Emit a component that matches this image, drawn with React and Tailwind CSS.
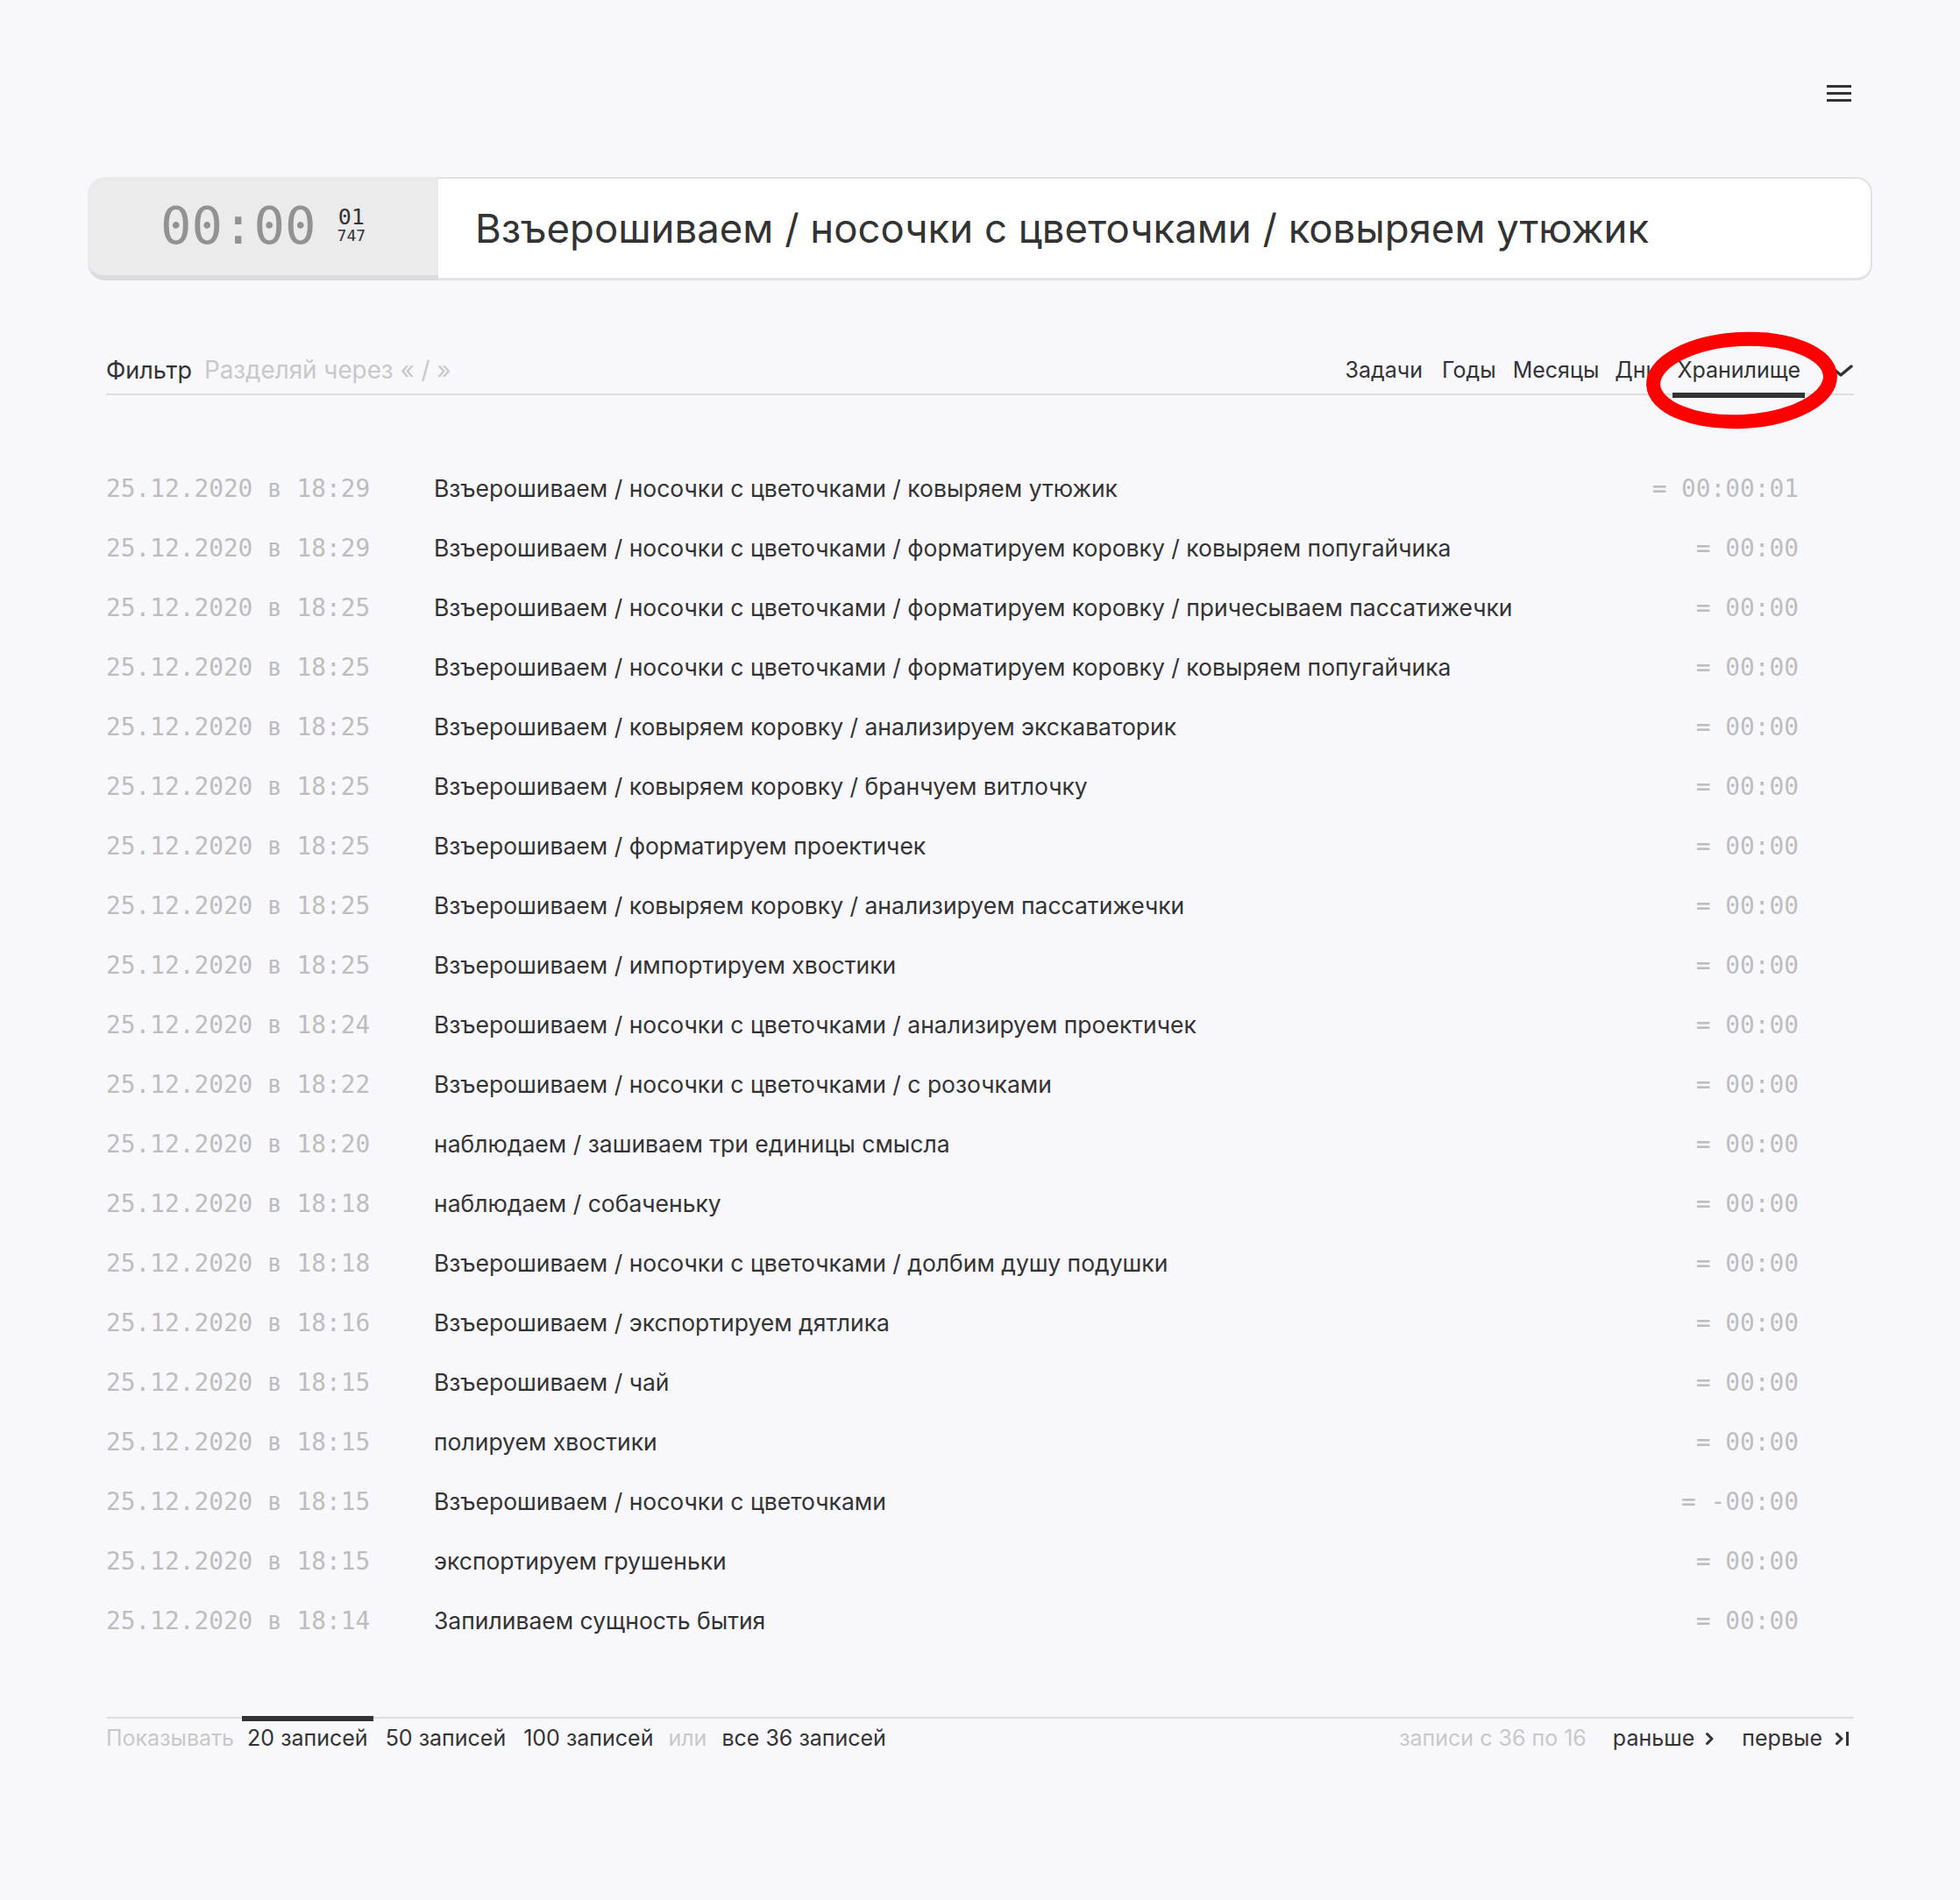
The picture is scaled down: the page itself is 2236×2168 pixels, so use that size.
import React from "react";

const rows = [
  ["18:29", "Взъерошиваем / носочки с цветочками / ковыряем утюжик", "= 00:00:01"],
  ["18:29", "Взъерошиваем / носочки с цветочками / форматируем коровку / ковыряем попугайчика", "= 00:00"],
  ["18:25", "Взъерошиваем / носочки с цветочками / форматируем коровку / причесываем пассатижечки", "= 00:00"],
  ["18:25", "Взъерошиваем / носочки с цветочками / форматируем коровку / ковыряем попугайчика", "= 00:00"],
  ["18:25", "Взъерошиваем / ковыряем коровку / анализируем экскаваторик", "= 00:00"],
  ["18:25", "Взъерошиваем / ковыряем коровку / бранчуем витлочку", "= 00:00"],
  ["18:25", "Взъерошиваем / форматируем проектичек", "= 00:00"],
  ["18:25", "Взъерошиваем / ковыряем коровку / анализируем пассатижечки", "= 00:00"],
  ["18:25", "Взъерошиваем / импортируем хвостики", "= 00:00"],
  ["18:24", "Взъерошиваем / носочки с цветочками / анализируем проектичек", "= 00:00"],
  ["18:22", "Взъерошиваем / носочки с цветочками / с розочками", "= 00:00"],
  ["18:20", "наблюдаем / зашиваем три единицы смысла", "= 00:00"],
  ["18:18", "наблюдаем / собаченьку", "= 00:00"],
  ["18:18", "Взъерошиваем / носочки с цветочками / долбим душу подушки", "= 00:00"],
  ["18:16", "Взъерошиваем / экспортируем дятлика", "= 00:00"],
  ["18:15", "Взъерошиваем / чай", "= 00:00"],
  ["18:15", "полируем хвостики", "= 00:00"],
  ["18:15", "Взъерошиваем / носочки с цветочками", "= -00:00"],
  ["18:15", "экспортируем грушеньки", "= 00:00"],
  ["18:14", "Запиливаем сущность бытия", "= 00:00"],
];

function Chevron({ className }) {
  return (
    <svg className={className} viewBox="0 0 10 16" fill="none">
      <path d="M2.5 2.5 L8 8 L2.5 13.5" stroke="#333" strokeWidth="3" strokeLinecap="round" strokeLinejoin="round" />
    </svg>
  );
}

export default function App() {
  return (
    <div className="min-h-[2168px] bg-[#f8f8fc] font-['Inter',sans-serif] text-[#333]">
      {/* top bar */}
      <div className="flex justify-end pr-[124px] pt-[97px]">
        <div className="flex w-[28px] flex-col gap-[5px]">
          <div className="h-[3px] bg-[#333]" />
          <div className="h-[3px] bg-[#333]" />
          <div className="h-[3px] bg-[#333]" />
        </div>
      </div>

      {/* timer card */}
      <div className="mx-[100px] mt-[86px] flex h-[118px]">
        <div className="flex w-[400px] items-center justify-center gap-[24px] rounded-l-[20px] border-b-[6px] border-[#dcdcdc] bg-[#ebebeb] pb-[2px] font-['DejaVu_Sans_Mono',monospace]">
          <span className="text-[59px] leading-none tracking-[0px] text-[#929292]">00:00</span>
          <div className="flex flex-col items-center leading-none text-[#333]">
            <span className="text-[25px] leading-[24px]">01</span>
            <span className="text-[18px] leading-[18px]">747</span>
          </div>
        </div>
        <div className="flex flex-1 items-center rounded-r-[18px] border-2 border-b-[3px] border-l-0 border-[#e2e2e2] bg-white pl-[42px]">
          <span className="text-[45.5px] leading-none">Взъерошиваем / носочки с цветочками / ковыряем утюжик</span>
        </div>
      </div>

      <div className="mx-[121px]">
        {/* filter header */}
        <div className="relative mt-[77px] flex h-[54px] items-stretch border-b-2 border-[#dedede] text-[25px]">
          <div className="flex items-center gap-[14px] text-[27px]">
            <span>Фильтр</span>
            <span className="text-[27.8px] text-[#c8c8c8]">Разделяй через « / »</span>
          </div>
          <div className="ml-auto flex items-stretch">
            <div className="flex items-center px-[6px]">Задачи</div>
            <div className="ml-[10px] flex items-center px-[6px]">Годы</div>
            <div className="ml-[7px] flex items-center px-[6px]">Месяцы</div>
            <div className="ml-[6px] flex items-center px-[6px]">Дни</div>
            <div className="relative ml-[10px] flex items-center px-[5px]">
              Хранилище
              <div className="absolute bottom-[-5px] left-0 right-0 h-[6px] bg-[#333]" />
            </div>
            <div className="ml-[26px] flex items-center">
              <svg width="30" height="16" viewBox="0 0 30 16" fill="none">
                <path d="M3 3 L15 13 L27 3" stroke="#333" strokeWidth="3.5" strokeLinecap="round" strokeLinejoin="round" />
              </svg>
            </div>
          </div>
          <svg className="pointer-events-none absolute right-[18px] top-[-19px]" width="220" height="112" viewBox="0 0 220 112" fill="none">
            <ellipse cx="110" cy="56" rx="101" ry="47" stroke="#ff0000" strokeWidth="16" transform="rotate(-3 110 56)" />
          </svg>
        </div>

        {/* rows */}
        <div className="mt-[73px] flex flex-col">
          {rows.map(([time, text, dur], i) => (
            <div key={i} className="flex h-[68px] items-center">
              <div className="w-[374px] shrink-0 whitespace-pre font-['DejaVu_Sans_Mono',monospace] text-[27.8px] text-[#bdbdbd]">
                {"25.12.2020 в " + time}
              </div>
              <div className="flex-1 text-[26.5px]">{text}</div>
              <div className="whitespace-pre pr-[63px] font-['DejaVu_Sans_Mono',monospace] text-[27.8px] text-[#bdbdbd]">
                {dur}
              </div>
            </div>
          ))}
        </div>

        {/* footer */}
        <div className="mt-[75px] flex h-[48px] items-stretch border-t-2 border-[#dedede] text-[25px]">
          <div className="flex items-stretch">
            <div className="flex items-center pr-[9px] text-[#c8c8c8]">Показывать</div>
            <div className="relative flex items-center px-[6px]">
              20 записей
              <div className="absolute left-0 right-0 top-[-3px] h-[6px] bg-[#333]" />
            </div>
            <div className="ml-[8px] flex items-center px-[6px]">50 записей</div>
            <div className="ml-[8px] flex items-center px-[6px]">100 записей</div>
            <div className="ml-[5px] flex items-center px-[6px] text-[#c8c8c8]">или</div>
            <div className="ml-[5px] flex items-center px-[6px]">все 36 записей</div>
          </div>
          <div className="ml-auto flex items-center">
            <span className="text-[#c8c8c8]">записи с 36 по 16</span>
            <span className="ml-[30px] flex items-center gap-[12px]">
              раньше
              <Chevron className="h-[16px] w-[10px]" />
            </span>
            <span className="ml-[32px] flex items-center gap-[14px]">
              первые
              <span className="flex items-center gap-[3px]">
                <Chevron className="h-[16px] w-[10px]" />
                <span className="h-[16px] w-[3px] bg-[#333]" />
              </span>
            </span>
            <span className="w-[6px]" />
          </div>
        </div>
      </div>
    </div>
  );
}
